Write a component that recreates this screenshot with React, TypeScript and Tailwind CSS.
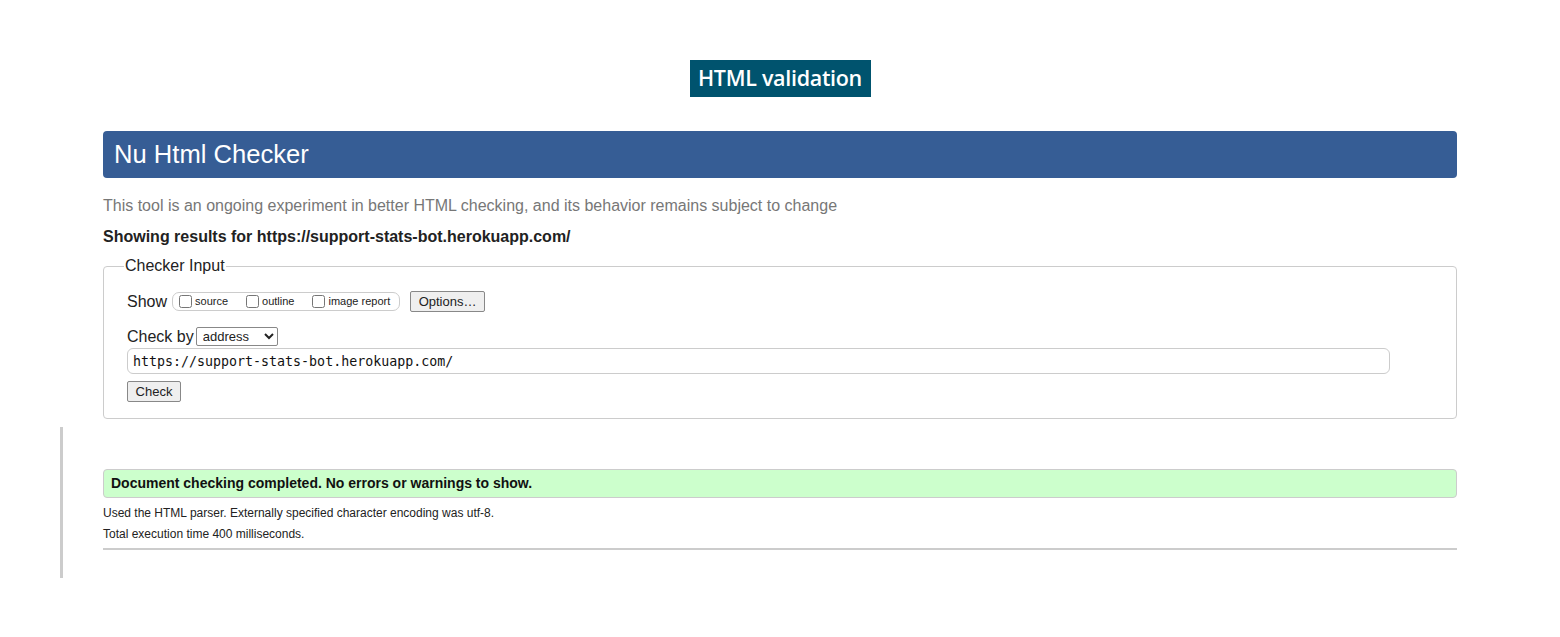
import { useState } from "react";

export default function App() {
    const [url, setUrl] = useState("https://support-stats-bot.herokuapp.com/");

    return (
        <div className="min-h-[637px] bg-white px-[103px] font-['Liberation_Sans',Arial,sans-serif] text-[#222]">
            {/* Page title */}
            <div className="flex justify-center pt-[60px]">
                <h2 className="flex h-[37px] w-[181px] items-center justify-center bg-[#00536e] font-['Open_Sans',sans-serif] text-[21.5px] font-semibold tracking-[-0.3px] text-white">
                    HTML validation
                </h2>
            </div>

            {/* Checker header */}
            <div className="mt-[34px] flex h-[47px] items-center rounded-[4px] bg-[#365d95] pl-[11px]">
                <h1 className="text-[25.6px] text-white">Nu Html Checker</h1>
            </div>

            <p className="mt-[18px] text-[16px] leading-[19px] text-[#777]">
                This tool is an ongoing experiment in better HTML checking, and its behavior remains subject to change
            </p>
            <p className="mt-[12px] text-[16px] font-bold leading-[19px] text-[#222]">
                Showing results for https://support-stats-bot.herokuapp.com/
            </p>

            {/* Checker input */}
            <fieldset className="mt-[11px] rounded-[4px] border border-[#ccc] pb-[16px] pl-[23px] pr-[66px]">
                <legend className="-ml-[3px] px-[1px] text-[16px] leading-[18px] text-[#222]">Checker Input</legend>

                <div className="mt-[16px] flex h-[21px] items-center">
                    <span className="text-[16px] leading-[19px]">Show</span>
                    <div className="ml-[5px] flex h-[19px] w-[228px] items-center rounded-[7px] border border-[#ccc] pl-[6px] text-[11px]">
                        <label className="flex items-center">
                            <input type="checkbox" className="m-0 h-[13px] w-[13px]" />
                            <span className="ml-[3px]">source</span>
                        </label>
                        <label className="ml-[18px] flex items-center">
                            <input type="checkbox" className="m-0 h-[13px] w-[13px]" />
                            <span className="ml-[3px]">outline</span>
                        </label>
                        <label className="ml-[18px] flex items-center">
                            <input type="checkbox" className="m-0 h-[13px] w-[13px]" />
                            <span className="ml-[3px]">image report</span>
                        </label>
                    </div>
                    <button
                        type="button"
                        className="ml-[10px] h-[21px] w-[75px] rounded-[2px] border border-[#888] bg-[#efefef] text-[13px]"
                    >
                        Options…
                    </button>
                </div>

                <div className="mt-[14px] flex h-[21px] items-center">
                    <span className="text-[16px] leading-[19px]">Check by</span>
                    <select
                        className="ml-[2px] h-[19px] w-[82px] rounded-[2px] border border-[#888] bg-white px-[2px] text-[13px] leading-[17px]"
                        defaultValue="address"
                    >
                        <option value="address">address</option>
                        <option value="file">file upload</option>
                        <option value="text">text input</option>
                    </select>
                </div>

                <input
                    value={url}
                    onChange={(e) => setUrl(e.target.value)}
                    className="mt-[1px] block h-[26px] w-full rounded-[6px] border border-[#ccc] px-[5px] font-['DejaVu_Sans_Mono',monospace] text-[13.3px] text-[#111] outline-none"
                />

                <button
                    type="button"
                    className="mt-[7px] block h-[21px] w-[54px] rounded-[2px] border border-[#888] bg-[#efefef] text-[13px]"
                >
                    Check
                </button>
            </fieldset>

            {/* Results */}
            <div className="-ml-[43px] mt-[8px] flex">
                <div className="w-[3px] bg-[#ccc]" />
                <div className="ml-[40px] flex-1 pb-[28px] pt-[42px]">
                    <div className="flex h-[29px] items-center rounded-[4px] border border-[#ccc] bg-[#ccffcc] pl-[7px]">
                        <p className="text-[14px] font-bold text-[#111]">
                            Document checking completed. No errors or warnings to show.
                        </p>
                    </div>
                    <p className="mt-[8px] text-[12px] leading-[14px] text-[#222]">
                        Used the HTML parser. Externally specified character encoding was utf-8.
                    </p>
                    <p className="mt-[7px] text-[12px] leading-[14px] text-[#222]">
                        Total execution time 400 milliseconds.
                    </p>
                    <hr className="mt-[7px] border-t-2 border-[#ccc]" />
                </div>
            </div>
        </div>
    );
}
